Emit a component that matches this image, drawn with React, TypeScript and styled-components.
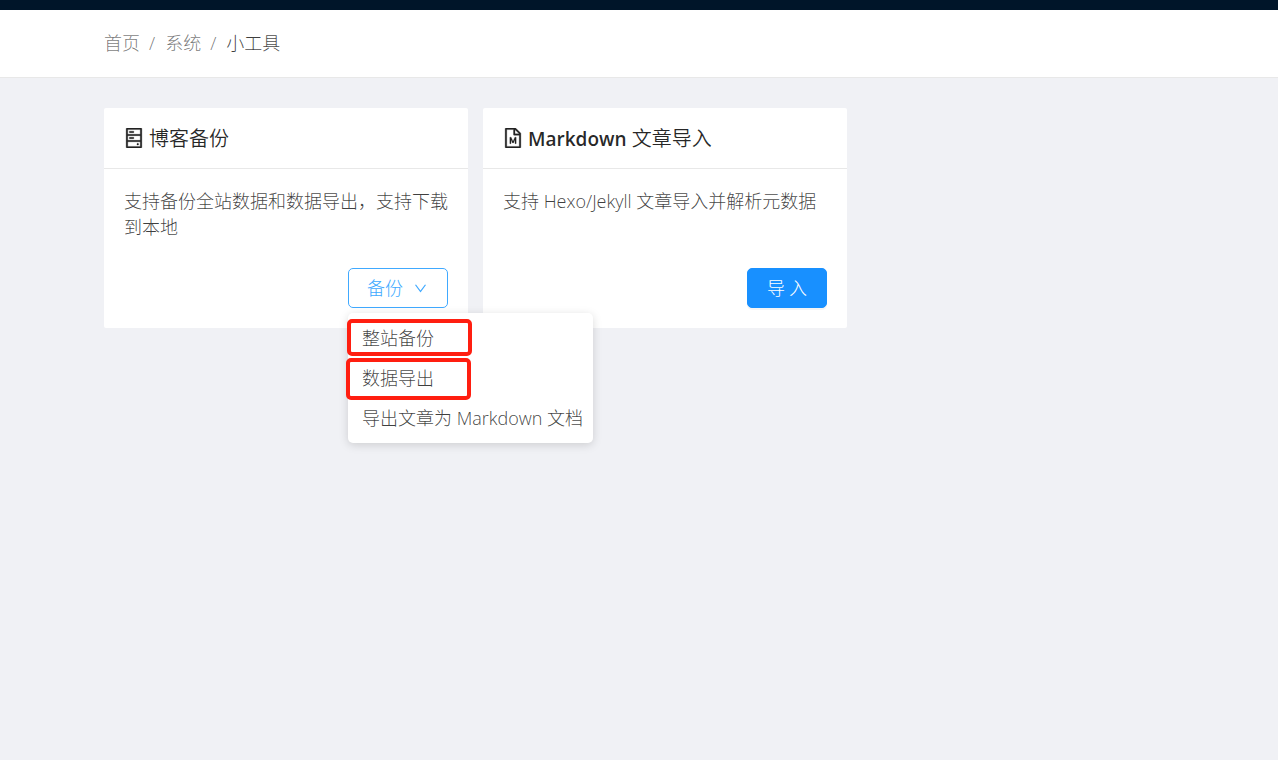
import React from 'react';
import styled, { createGlobalStyle, css } from 'styled-components';
import { AiOutlineDown, AiOutlineFileMarkdown, AiOutlineHdd } from 'react-icons/ai';

const GlobalStyle = createGlobalStyle`
  * {
    box-sizing: border-box;
  }

  body {
    margin: 0;
    background: #f0f1f5;
    color: rgba(0, 0, 0, 0.75);
    font-family: 'Open Sans', 'Noto Sans CJK SC', sans-serif;
    font-size: 18px;
    font-weight: 300;
    line-height: 26px;
  }

  h2, p, ul, ol {
    margin: 0;
    padding: 0;
  }

  button {
    font: inherit;
    cursor: pointer;
  }
`;

const Page = styled.div`
  min-height: 100vh;
`;

const TopBar = styled.div`
  height: 10px;
  background: #001529;
`;

const PageHeader = styled.header`
  padding: 20px 52px 21px 104px;
  background: #fff;
  border-bottom: 1px solid #e8e8e8;
`;

const Crumbs = styled.ol`
  display: flex;
  list-style: none;
`;

const Crumb = styled.li`
  &:not(:last-child)::after {
    content: '/';
    margin: 0 10px 0 9px;
    color: rgba(0, 0, 0, 0.55);
  }
`;

const CrumbLink = styled.a`
  color: rgba(0, 0, 0, 0.55);
  text-decoration: none;
`;

const Tools = styled.main`
  display: grid;
  grid-template-columns: repeat(3, minmax(0, 1fr));
  gap: 15px;
  padding: 30px 52px 30px 104px;
`;

const Card = styled.section`
  display: flex;
  flex-direction: column;
  background: #fff;
  border-radius: 2px;
`;

const CardTitle = styled.h2`
  display: flex;
  align-items: center;
  gap: 5px;
  padding: 15px 20px;
  border-bottom: 1px solid #e8e8e8;
  color: rgba(0, 0, 0, 0.85);
  font-size: 20px;
  font-weight: 350;
  line-height: 30px;

  svg {
    stroke-width: 14px;
  }
`;

const TitleText = styled.span`
  padding-top: 2px;
  line-height: 28px;
`;

const Latin = styled.span`
  font-size: 19px;
  font-weight: 600;
`;

const CardBody = styled.div`
  display: flex;
  flex: 1;
  flex-direction: column;
  gap: 26px;
  padding: 19px 20px 20px;
`;

const Description = styled.p`
  min-height: 54px;
`;

const Actions = styled.div`
  display: flex;
  justify-content: flex-end;
`;

const Button = styled.button<{ $primary?: boolean }>`
  display: flex;
  align-items: center;
  justify-content: center;
  gap: 11px;
  height: 40px;
  min-width: 80px;
  padding: 0 20px 0 18px;
  border: 1px solid #40a9ff;
  border-radius: 5px;
  background: #fff;
  color: #40a9ff;

  ${({ $primary }) =>
    $primary &&
    css`
      gap: 4px;
      padding: 0 18px;
      border-color: #1890ff;
      background: #1890ff;
      color: #fff;
      box-shadow: 0 2px 0 rgba(0, 0, 0, 0.04);
    `}
`;

const Dropdown = styled.div`
  position: relative;
`;

const Menu = styled.ul`
  position: absolute;
  top: 45px;
  left: 0;
  z-index: 1;
  width: 245px;
  padding: 5px 0;
  border-radius: 5px;
  background: #fff;
  box-shadow: 0 2px 10px rgba(0, 0, 0, 0.15);
  list-style: none;
`;

const MenuItem = styled.li`
  position: relative;
`;

const MenuButton = styled.button`
  width: 100%;
  height: 40px;
  padding: 0 0 0 14px;
  border: 0;
  background: none;
  color: rgba(0, 0, 0, 0.75);
  text-align: left;
  white-space: nowrap;
`;

const Highlight = styled.span<{ $tall?: boolean }>`
  position: absolute;
  top: ${({ $tall }) => ($tall ? 0 : 1)}px;
  left: ${({ $tall }) => ($tall ? -2 : -1)}px;
  width: 125px;
  height: ${({ $tall }) => ($tall ? 42 : 37)}px;
  border: 4px solid #ff1e10;
  border-radius: 5px;
  pointer-events: none;
`;

// Trims the icons' built-in margin so that they fill their box.
const ICON_VIEW = '64 64 896 896';

export default function App() {
  return (
    <>
      <GlobalStyle />
      <Page>
        <TopBar />
        <PageHeader>
          <nav>
            <Crumbs>
              <Crumb>
                <CrumbLink href="#home">首页</CrumbLink>
              </Crumb>
              <Crumb>
                <CrumbLink href="#system">系统</CrumbLink>
              </Crumb>
              <Crumb>小工具</Crumb>
            </Crumbs>
          </nav>
        </PageHeader>
        <Tools>
          <Card>
            <CardTitle>
              <AiOutlineHdd size={20} viewBox={ICON_VIEW} />
              <TitleText>博客备份</TitleText>
            </CardTitle>
            <CardBody>
              <Description>支持备份全站数据和数据导出，支持下载到本地</Description>
              <Actions>
                <Dropdown>
                  <Button type="button">
                    备份
                    <AiOutlineDown size={13} viewBox={ICON_VIEW} />
                  </Button>
                  <Menu>
                    <MenuItem>
                      <MenuButton type="button">整站备份</MenuButton>
                      <Highlight />
                    </MenuItem>
                    <MenuItem>
                      <MenuButton type="button">数据导出</MenuButton>
                      <Highlight $tall />
                    </MenuItem>
                    <MenuItem>
                      <MenuButton type="button">导出文章为 Markdown 文档</MenuButton>
                    </MenuItem>
                  </Menu>
                </Dropdown>
              </Actions>
            </CardBody>
          </Card>
          <Card>
            <CardTitle>
              <AiOutlineFileMarkdown size={20} viewBox={ICON_VIEW} />
              <TitleText>
                <Latin>Markdown</Latin> 文章导入
              </TitleText>
            </CardTitle>
            <CardBody>
              <Description>支持 Hexo/Jekyll 文章导入并解析元数据</Description>
              <Actions>
                <Button type="button" $primary>
                  <span>导</span>
                  <span>入</span>
                </Button>
              </Actions>
            </CardBody>
          </Card>
        </Tools>
      </Page>
    </>
  );
}
